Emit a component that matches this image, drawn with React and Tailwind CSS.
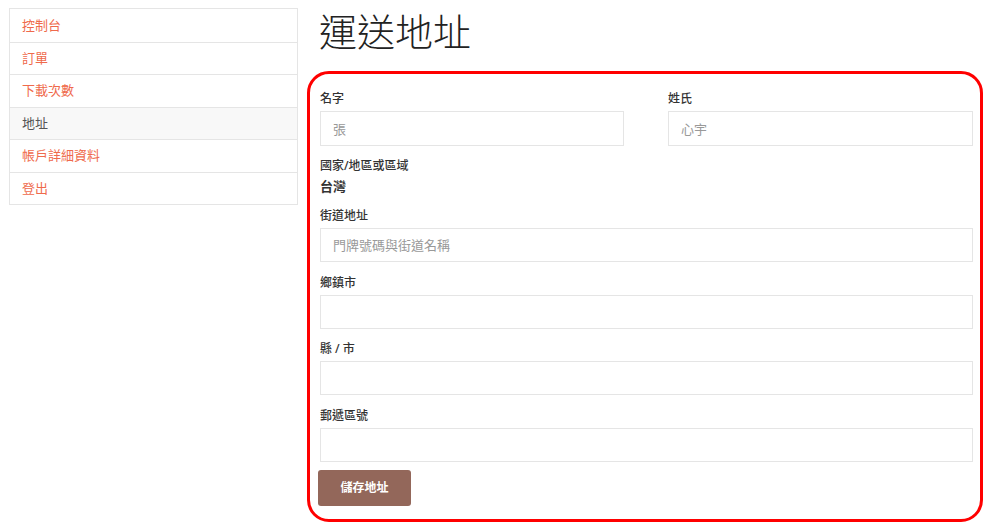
import { useState } from "react";

const font = { fontFamily: '"Noto Sans", "Noto Sans CJK TC", sans-serif' };

const links = [
	{ label: "控制台" },
	{ label: "訂單" },
	{ label: "下載次數" },
	{ label: "地址", active: true },
	{ label: "帳戶詳細資料" },
	{ label: "登出" },
];

function Field({ label, placeholder, value, onChange, tall }) {
	return (
		<div className="flex flex-col">
			<label className="mb-1 h-4 text-[12px] font-medium leading-4 text-[#333]">
				{label}
			</label>
			<input
				value={value}
				onChange={onChange}
				placeholder={placeholder}
				className={
					"w-full border border-[#e5e5e5] bg-white px-3 text-[13px] text-[#555] outline-none placeholder:text-[#999] " +
					(tall ? "h-[35px]" : "h-[34px]")
				}
			/>
		</div>
	);
}

export default function App() {
	const [street, setStreet] = useState("");
	const [town, setTown] = useState("");
	const [county, setCounty] = useState("");
	const [zip, setZip] = useState("");

	return (
		<div className="flex min-h-[526px] gap-[9px] bg-white pl-[9px] pt-2" style={font}>
			{/* account nav */}
			<nav className="w-[289px] self-start border border-[#e5e5e5]">
				{links.map((l, i) => (
					<a
						key={l.label}
						href="#"
						className={
							"flex h-[32.5px] items-center pl-3 text-[13px] " +
							(i > 0 ? "border-t border-[#e5e5e5] " : "") +
							(l.active ? "bg-[#f8f8f8] text-[#555]" : "text-[#ef6a4c]")
						}
					>
						{l.label}
					</a>
				))}
			</nav>

			<main className="w-[676px]">
				<h1 className="mt-[2px] pl-3 text-[38px] font-light leading-[43px] text-[#222]">
					運送地址
				</h1>

				<form
					onSubmit={(e) => e.preventDefault()}
					className="mt-[18px] rounded-[22px] border-[3px] border-[#ff0000] pb-[13px] pl-[10px] pr-[7px] pt-[17px]"
				>
					<div className="grid grid-cols-[304px_305px] gap-x-[44px]">
						<Field label="名字" placeholder="張" tall />
						<Field label="姓氏" placeholder="心宇" tall />
					</div>

					<div className="mt-3">
						<p className="mt-[1px] h-4 text-[12px] font-medium leading-4 text-[#333]">國家/地區或區域</p>
						<p className="mt-[2px] text-[13px] font-semibold leading-5 text-[#333]">台灣</p>
					</div>

					<div className="mt-3 flex flex-col gap-[12.5px]">
						<Field
							label="街道地址"
							placeholder="門牌號碼與街道名稱"
							value={street}
							onChange={(e) => setStreet(e.target.value)}
						/>
						<Field label="鄉鎮市" value={town} onChange={(e) => setTown(e.target.value)} />
						<Field label="縣 / 市" value={county} onChange={(e) => setCounty(e.target.value)} />
						<Field label="郵遞區號" value={zip} onChange={(e) => setZip(e.target.value)} />
					</div>

					<button
						type="submit"
						className="-ml-[2px] mt-[8px] h-9 w-[93px] rounded-[3px] bg-[#93675a] text-[12px] font-bold text-white"
					>
						儲存地址
					</button>
				</form>
			</main>
		</div>
	);
}
